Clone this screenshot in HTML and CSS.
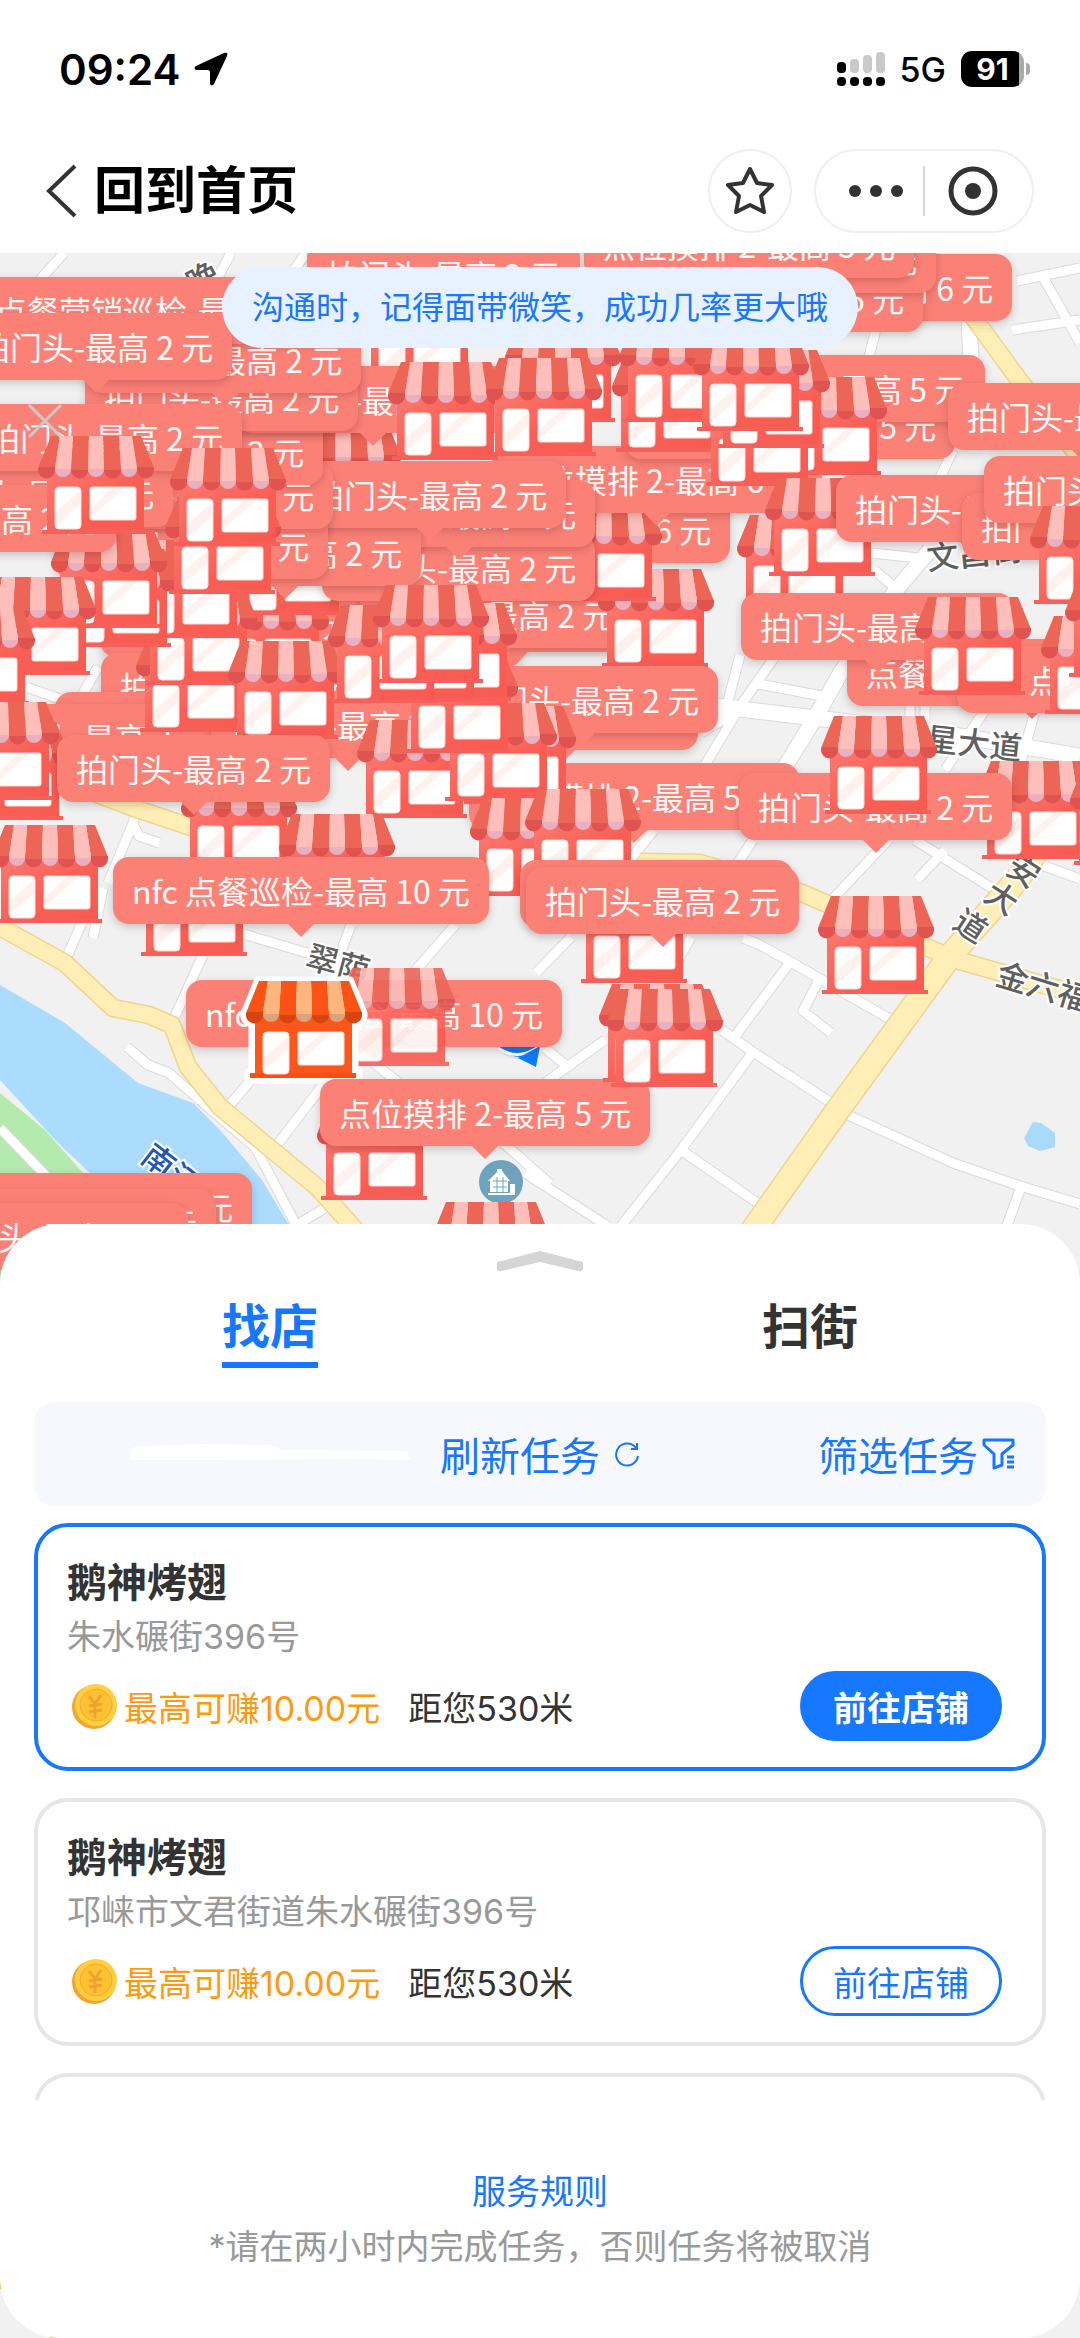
FILE: index.html
```html
<!DOCTYPE html>
<html lang="zh-CN">
<head>
    <meta charset="UTF-8">
    <meta name="viewport" content="width=device-width, initial-scale=1.0">
    <title>回到首页</title>
    <link rel="stylesheet" href="styles.css">
</head>
<body>
<div class="app">
    <div class="map" id="map">
        <svg class="map-base" viewBox="0 0 1080 2338" preserveAspectRatio="xMidYMin slice" aria-hidden="true">
            <defs>
                <linearGradient id="wall" x1="0" y1="0" x2="1" y2="1">
                    <stop offset="0" stop-color="#fb7a70"/>
                    <stop offset="0.6" stop-color="#f95e55"/>
                    <stop offset="1" stop-color="#f85a50"/>
                </linearGradient>
                <g id="glass">
                    <rect x="18" y="51" width="26" height="42" rx="4" fill="#fff" stroke="#ffd9d2"/>
                    <rect x="53" y="51" width="46" height="33" rx="2" fill="#fff" stroke="#ffd9d2"/>
                    <path d="M19 76 43 55v13L19 89zM54 72 76 52h11L54 81z" fill="#fff1ed"/>
                </g>
                <symbol id="shop" viewBox="0 0 118 98">
                    <path d="M10 30h97v66H10z" fill="url(#wall)"/>
                    <path d="M5 94h106v4H5z" fill="#f5605a"/>
                    <use href="#glass"/>
                    <path d="M14 0h9L18 32a8 8 0 0 1-17 0zM36 0h16l-1 32a8 8 0 0 1-17 0zM66 0h16l2 32a8 8 0 0 1-17 0zM95 0h9l13 32a8 8 0 0 1-17 0z" fill="#ec6557"/>
                    <path d="M2 31h16v3a8 8 0 0 1-17 0zM34 34h17a8 8 0 0 1-17 0zM67 34h17a8 8 0 0 1-17 0zM100 31h17v3a8 8 0 0 1-17 0z" fill="#df5350"/>
                    <path d="M23 0h13l-2 32a8 8 0 0 1-16 0zM52 0h14l1 32a8 8 0 0 1-16 0zM82 0h13l5 32a8 8 0 0 1-16 0z" fill="#febfba"/>
                    <path d="M18 33h16a8 8 0 0 1-16 0zM51 33h16a8 8 0 0 1-16 0zM84 33h16a8 8 0 0 1-16 0z" fill="#e8b0c0"/>
                </symbol>
                <symbol id="shop-active" viewBox="-5 -5 128 108">
                    <path d="M12-2h94l14 34c1 7-4 11-9 12v46h4v11H2V90h4V44C0 42-3 38-2 32z" fill="#fff" stroke="#fff" stroke-width="5" stroke-linejoin="round"/>
                    <path d="M10 30h97v66H10z" fill="#fb571b"/>
                    <path d="M5 92h106v5H5z" fill="#f84f14"/>
                    <use href="#glass"/>
                    <path d="M14 0h9L18 32a8 8 0 0 1-17 0zM36 0h16l-1 32a8 8 0 0 1-17 0zM66 0h16l2 32a8 8 0 0 1-17 0zM95 0h9l13 32a8 8 0 0 1-17 0z" fill="#fd5216"/>
                    <path d="M2 31h16v3a8 8 0 0 1-17 0zM34 34h17a8 8 0 0 1-17 0zM67 34h17a8 8 0 0 1-17 0zM100 31h17v3a8 8 0 0 1-17 0z" fill="#d6450f"/>
                    <path d="M23 0h13l-2 32a8 8 0 0 1-16 0zM52 0h14l1 32a8 8 0 0 1-16 0zM82 0h13l5 32a8 8 0 0 1-16 0z" fill="#ffb67d"/>
                    <path d="M18 33h16a8 8 0 0 1-16 0zM51 33h16a8 8 0 0 1-16 0zM84 33h16a8 8 0 0 1-16 0z" fill="#dca27c"/>
                </symbol>
                <path id="roads" d="M64 253 36 284M231 253l-14 26M306 253l-14 20M26 687l34 12M98 667l-18 32M141 795l-8 28-25 60M133 824l6 12 20 7M83 920l-20 46M103 888l-10 50M203 955l-31 68M240 933l74 22 30 20M351 925l-30 80M455 925l-40 46M251 1080l-22 26M323 1085l-46 60M370 1060l30 24M877 325l-10 40M1017 281l63-13M1043 277l37 66M1012 330l68-10M880 430l200-20M953 450l-16 34M871 553l48 5M898 590l-24-20M740 655l-14 54M753 683l69 13M705 765l36-60 35-50M654 830l-40 50M753 840l-20 30M890 838l-60 64M915 840l80 50M945 850l-28 30M1036 863l44 16M985 710l-40 60M1034 715l-14 50M910 690v30M925 690v30M571 937l-35 36M743 938l17 7 31 17 31 18 73 42M788 965l-52 70M722 1030l31 22 80 52M753 1052l-72 98-60 76M681 1150l78 54M848 1115l105 48 67 23 60 18M1021 1187l-16 44M819 980l-16 31 28 22M605 1040l-38 27-30 22M545 1048l24 20M525 1173l84 54M500 1140l50 44M691 937l-14 25M127 1047l21 18 21 8 34 30 52 44 40 76M285 1232l40-24M0 1128l50 52"/>
                <path id="wide-roads" d="M930 550l-34 40-56 84-25 44-32 52M715 706l100 12 120 14 145 24M969 320l2 40M700 730l40-24"/>
                <path id="main-roads" d="M0 927l65 36 48 45 36 7 23 10 16 42 32 40 97 80 45 50M968 310l54 74 60 76M60 780l80 30 60 20M640 862l60 1 102 30 124 54 34 14 120 34"/>
                <path id="avenue" d="M1085 780l-68 100-67 76-110 151-92 130"/>
            </defs>
            <rect width="1080" height="2338" fill="#f1f1f1"/>
            <path d="M0 985l65 38 73 60 55 20 27 27 42 50 30 50v60H160l-67-114-35-33L0 1080z" fill="#abdcfd"/>
            <path d="M0 1093l45 37 38 43 77 100-20 60H0z" fill="#b4eaae"/>
            <path d="M1024 1138l9-16 8 1 14 10v14l-15 4-12-5z" fill="#a9daf9"/>
            <g fill="none" stroke-linejoin="round">
                <use href="#roads" stroke="#dadada" stroke-width="11"/>
                <use href="#wide-roads" stroke="#dadada" stroke-width="17"/>
                <use href="#roads" stroke="#fff" stroke-width="9"/>
                <use href="#wide-roads" stroke="#fff" stroke-width="15"/>
                <use href="#main-roads" stroke="#f0d58f" stroke-width="19"/>
                <use href="#avenue" stroke="#f0d58f" stroke-width="26"/>
                <use href="#main-roads" stroke="#ffeeb5" stroke-width="16"/>
                <use href="#avenue" stroke="#ffeeb5" stroke-width="23"/>
            </g>
            <g class="road-names">
                <text transform="translate(194 296) rotate(-28)">晚</text>
                <text transform="translate(928 570) rotate(-6)">文昌街</text>
                <text transform="translate(925 750) rotate(6)">星大道</text>
                <text transform="translate(1004 872) rotate(33)">安</text>
                <text transform="translate(982 899) rotate(33)">大</text>
                <text transform="translate(951 927) rotate(33)">道</text>
                <text transform="translate(994 984) rotate(17)">金六福路</text>
                <text transform="translate(304 967) rotate(15)">翠荫</text>
                <text class="river-name" transform="translate(139 1160) rotate(38)">南河</text>
            </g>
            <circle cx="518" cy="1034" r="24" fill="#fff" stroke="#e2e2e2" stroke-width="2"/>
            <circle cx="520" cy="1030" r="27" fill="#0a7cff"/>
            <path d="M498 1048q20 14 42-2" fill="none" stroke="#fff" stroke-width="3"/>
            <path d="M540 1046l-4 21-18-9z" fill="#0a7cff"/>
            <circle cx="501" cy="1182" r="22" fill="#6fa3bd"/>
            <path d="M488 1181l9-9v-3h5v2l8 10h-2v11h-18v-11zM510 1184h5v10h-5zM488 1193h27v2h-27z" fill="#fff"/>
            <path d="M493 1181h14M493 1187h14M497 1177v15M503 1177v15" stroke="#6fa3bd" stroke-width="1"/>
            <ellipse cx="-2" cy="2280" rx="5" ry="10" fill="#fba62b"/>
            <ellipse cx="60" cy="2338" rx="10" ry="4" fill="#fba62b"/>
        </svg>
    </div>

    <header class="header">
        <div class="status-bar">
            <div class="status-left">
                <span class="clock">09:24</span>
                <svg width="34" height="34" viewBox="0 0 34 34"><path d="M30 1c3-1 4 0 3 3L20 32c-1 2-4 2-4-1V20c0-1-1-2-2-2H3c-3 0-3-3-1-4z"/></svg>
            </div>
            <div class="status-right">
                <svg width="48" height="36" viewBox="0 0 48 36">
                    <g fill="#c9c9c9"><rect x="13" y="8" width="9" height="14" rx="4"/><rect x="26" y="4" width="9" height="18" rx="4"/><rect x="39" y="1" width="9" height="21" rx="4"/></g>
                    <rect y="11" width="9" height="11" rx="4"/>
                    <rect y="26" width="9" height="9" rx="4"/><rect x="13" y="26" width="9" height="9" rx="4"/><rect x="26" y="26" width="9" height="9" rx="4"/><rect x="39" y="26" width="9" height="9" rx="4"/>
                </svg>
                <span class="network">5G</span>
                <span class="battery">91</span>
            </div>
        </div>
        <nav class="nav-bar">
            <a class="back" href="#">
                <svg width="32" height="54" viewBox="0 0 32 54" fill="none" stroke="#333" stroke-width="4"><path d="M29 2 3 27l26 25"/></svg>
                <span>回到首页</span>
            </a>
            <div class="nav-actions">
                <button class="favorite" aria-label="收藏">
                    <svg width="50" height="50" viewBox="0 0 50 50" fill="none" stroke="#333" stroke-width="4" stroke-linejoin="round"><path d="M25 3l7 14 15 2-11 11 3 16-14-7-14 7 3-16L3 19l15-2z"/></svg>
                </button>
                <div class="capsule">
                    <button aria-label="更多">
                        <svg width="54" height="12" viewBox="0 0 54 12" fill="#333"><circle cx="6" cy="6" r="6"/><circle cx="27" cy="6" r="6"/><circle cx="48" cy="6" r="6"/></svg>
                    </button>
                    <button aria-label="关闭">
                        <svg width="50" height="50" viewBox="0 0 50 50"><circle cx="25" cy="25" r="22" fill="none" stroke="#333" stroke-width="5"/><circle cx="25" cy="25" r="8" fill="#333"/></svg>
                    </button>
                </div>
            </div>
        </nav>
    </header>

    <p class="tip">沟通时，记得面带微笑，成功几率更大哦</p>
    <button class="tip-close" aria-label="关闭提示">
        <svg width="34" height="34" viewBox="0 0 34 34" stroke="#c9c9c9" stroke-width="3"><path d="M1 1l32 32M33 1 1 33"/></svg>
    </button>

    <main class="sheet">
        <svg class="handle" width="88" height="22" viewBox="0 0 88 22"><path d="M1 12 44 1l43 11v6q0 4-5 3L44 12 6 21q-5 1-5-3z" fill="#d5d5d5"/></svg>
        <div class="tabs">
            <button class="tab active">找店</button>
            <button class="tab">扫街</button>
        </div>
        <div class="toolbar">
            <svg class="smear" viewBox="0 0 282 22" aria-hidden="true"><path d="M3 5 10 3l60-2 70 1 14 5 124 1 4 9-60-1-150 1-70 0-2-2z" fill="#fff"/></svg>
            <button class="tool">刷新任务
                <svg width="26" height="26" viewBox="0 0 26 26" fill="none" stroke="#1677ff" stroke-width="2"><path d="M22 7a11 11 0 1 0 2 8M23 2v6h-6"/></svg>
            </button>
            <button class="tool filter">筛选任务
                <svg width="34" height="34" viewBox="0 0 34 34" fill="none" stroke="#1677ff" stroke-width="3" stroke-linejoin="round"><path d="M20 17l11-9V3H2v5l10 9v14l8-3zM25 20h7M25 25h7M25 30h7"/></svg>
            </button>
        </div>
        <div class="list">
            <article class="card selected">
                <h2>鹅神烤翅</h2>
                <p class="address">朱水碾街396号</p>
                <div class="card-row">
                    <svg class="coin" width="48" height="48" viewBox="0 0 48 48"><circle cx="23" cy="25" r="22" fill="#f2a531"/><circle cx="25" cy="23" r="21" fill="#ffcf40"/><circle cx="25" cy="23" r="16" fill="#fdc233" stroke="#f3ab2b"/><path d="M18 14l6 8 6-9M24 22v14M18 24l13-2M18 30l13-2" fill="none" stroke="#eda52c" stroke-width="3"/></svg>
                    <span class="reward">最高可赚10.00元</span>
                    <span class="distance">距您530米</span>
                    <button class="go">前往店铺</button>
                </div>
            </article>
            <article class="card">
                <h2>鹅神烤翅</h2>
                <p class="address">邛崃市文君街道朱水碾街396号</p>
                <div class="card-row">
                    <svg class="coin" width="48" height="48" viewBox="0 0 48 48"><circle cx="23" cy="25" r="22" fill="#f2a531"/><circle cx="25" cy="23" r="21" fill="#ffcf40"/><circle cx="25" cy="23" r="16" fill="#fdc233" stroke="#f3ab2b"/><path d="M18 14l6 8 6-9M24 22v14M18 24l13-2M18 30l13-2" fill="none" stroke="#eda52c" stroke-width="3"/></svg>
                    <span class="reward">最高可赚10.00元</span>
                    <span class="distance">距您530米</span>
                    <button class="go">前往店铺</button>
                </div>
            </article>
            <article class="card"></article>
        </div>
        <footer class="footer">
            <a href="#">服务规则</a>
            <p>*请在两小时内完成任务，否则任务将被取消</p>
        </footer>
    </main>
</div>
<script src="script.js"></script>
</body>
</html>
```

FILE: styles.css
```css
* {
    box-sizing: border-box;
}

body {
    margin: 0;
    font-family: Inter, "Noto Sans CJK SC", sans-serif;
    font-size: 34px;
    color: #333;
    background: #f1f1f1;
}

h2, p {
    margin: 0;
}

button {
    padding: 0;
    border: 0;
    background: none;
    font: inherit;
    color: inherit;
    cursor: pointer;
}

a {
    color: inherit;
    text-decoration: none;
}

svg {
    display: block;
    flex-shrink: 0;
}

.app {
    position: relative;
    display: flex;
    flex-direction: column;
    min-height: 100vh;
    overflow: hidden;
}

/* map */
.map {
    position: absolute;
    inset: 0;
    overflow: hidden;
    font-family: "Noto Sans CJK SC", sans-serif;
}

.map-base {
    width: 100%;
    height: 100%;
}

.road-names {
    font-size: 32px;
    font-weight: 500;
    fill: #5f5f5f;
    stroke: #fff;
    stroke-width: 4px;
    paint-order: stroke;
}

.river-name {
    fill: #2456b8;
}

.shop {
    position: absolute;
    width: 118px;
    height: 98px;
}

.shop.faded {
    opacity: 0.9;
}

.shop.active {
    width: 128px;
    height: 108px;
}

.bubble {
    position: absolute;
    height: 67px;
    padding: 0 19px;
    border-radius: 16px;
    background: #fb8177;
    box-shadow: 0 3px 8px rgba(60, 20, 20, 0.22);
    color: #fff8f6;
    font-size: 32px;
    line-height: 67px;
    white-space: nowrap;
}

.bubble::after {
    content: "";
    position: absolute;
    top: 100%;
    left: 50%;
    margin-left: -13px;
    border: 13px solid transparent;
    border-top-color: #fb8177;
    border-bottom: 0;
}

/* header */
.header {
    position: relative;
    background: #fff;
}

.status-bar,
.nav-bar,
.status-left,
.status-right,
.nav-actions,
.capsule,
.back {
    display: flex;
    align-items: center;
}

.status-bar {
    justify-content: space-between;
    height: 138px;
    padding: 0 50px 0 59px;
    color: #000;
}

.status-left {
    gap: 14px;
}

.status-right {
    gap: 15px;
}

.clock {
    font-size: 42px;
    font-weight: 600;
}

.network {
    font-size: 34px;
    font-weight: 500;
}

.battery {
    position: relative;
    width: 63px;
    height: 36px;
    margin-right: 6px;
    border-radius: 11px;
    background: linear-gradient(90deg, #000 58px, #aaa 58px);
    color: #fff;
    font-size: 30px;
    font-weight: 700;
    line-height: 36px;
    text-align: center;
}

.battery::after {
    content: "";
    position: absolute;
    top: 12px;
    right: -6px;
    width: 4px;
    height: 12px;
    border-radius: 0 4px 4px 0;
    background: #aaa;
}

.nav-bar {
    justify-content: space-between;
    height: 115px;
    padding: 0 46px 10px;
}

.back {
    gap: 16px;
    color: #000;
    font-size: 51px;
    font-weight: 600;
}

.back span {
    padding-bottom: 8px;
}

.nav-actions {
    gap: 22px;
}

.favorite,
.capsule {
    height: 84px;
    border: 2px solid #efefef;
    border-radius: 42px;
}

.favorite {
    display: grid;
    place-items: center;
    width: 84px;
}

.capsule {
    width: 220px;
    padding: 0 12px;
}

.capsule button {
    display: grid;
    flex: 1;
    place-items: center;
    height: 50px;
}

.capsule button + button {
    border-left: 2px solid #d8d8d8;
}

/* tip over the map */
.tip {
    position: relative;
    align-self: center;
    margin-top: 14px;
    padding: 0 30px;
    border-radius: 41px;
    background: #e7f1ff;
    color: #1677ff;
    font-size: 32px;
    line-height: 81px;
}

.tip-close {
    position: relative;
    align-self: flex-start;
    margin: 56px 28px 0;
}

/* bottom sheet */
.sheet {
    position: relative;
    display: flex;
    flex-direction: column;
    margin-top: auto;
    padding: 26px 34px 64px;
    border-radius: 60px;
    background: #fff;
}

.handle {
    align-self: center;
}

.tabs {
    display: flex;
    justify-content: space-around;
    margin: 22px -34px 34px;
}

.tab {
    padding-bottom: 2px;
    border-bottom: 6px solid transparent;
    font-size: 48px;
    font-weight: 600;
    line-height: 66px;
}

.tab.active {
    border-color: #1677ff;
    color: #1677ff;
}

.toolbar {
    display: flex;
    align-items: center;
    height: 104px;
    padding: 0 30px;
    border-radius: 20px;
    background: #f6f8fd;
    color: #1677ff;
    font-size: 40px;
}

.smear {
    width: 282px;
    margin: 0 29px 0 65px;
}

.tool {
    display: flex;
    align-items: center;
    gap: 14px;
}

.filter {
    gap: 4px;
    margin-left: auto;
}

.list {
    display: flex;
    flex-direction: column;
    gap: 27px;
    height: 594px;
    padding-top: 17px;
    overflow: hidden;
}

.card {
    flex: none;
    min-height: 248px;
    padding: 28px 40px 26px 29px;
    border: 4px solid #e6e6e6;
    border-radius: 34px;
}

.card.selected {
    border-color: #1677ff;
}

.card h2 {
    font-size: 40px;
    font-weight: 700;
    line-height: 56px;
}

.address {
    color: #999;
    line-height: 52px;
}

.card-row {
    display: flex;
    align-items: center;
    margin-top: 8px;
}

.coin {
    margin: 0 5px 0 4px;
}

.reward {
    color: #ff9a0e;
}

.distance {
    margin-left: 28px;
}

.go {
    width: 202px;
    height: 70px;
    margin-left: auto;
    border: 3px solid #1677ff;
    border-radius: 35px;
    color: #1677ff;
}

.selected .go {
    background: #1677ff;
    color: #fff;
    font-weight: 600;
}

.footer {
    margin-top: 64px;
    color: #999;
    line-height: 55px;
    text-align: center;
}

.footer a {
    color: #1677ff;
}
```

FILE: script.js
```js
const map = document.getElementById('map');

const texts = {
    door2: '拍门头-最高 2 元',
    survey5: '点位摸排 2-最高 5 元',
    survey6: '点位摸排 2-最高 6 元',
    nfc: 'nfc 点餐巡检-最高 10 元',
    promo: '点餐营销巡检-最高 5 元'
};

// [type, x, y], drawn from back to front
const pins = [
    ['survey6', 682, 254], ['survey5', 593, 265], ['survey5', 606, 226], ['survey5', 584, 211], ['door2', 307, 241],
    ['door2', 250, 600], ['door2', 100, 590], ['shop', 361, 290],
    ['door2', 378, 585], ['door2', 360, 581], ['shop', 597, 569], ['survey6', 400, 496],
    ['shop', 545, 503], ['survey6', 492, 446],
    ['shop', 212, 588], ['shop', 232, 517], ['shop', 284, 424],
    ['door2', 322, 534], ['door2', 322, 480], ['door2', 148, 519], ['door2', 293, 461],
    ['door2', 55, 512], ['door2', 60, 462], ['door2', 50, 418], ['door2', 236, 366],
    ['door2', 85, 364], ['door2', 88, 326],
    ['door2', -100, 460], ['door2', -31, 404], ['promo', -24, 277], ['door2', -41, 313],
    ['survey5', 625, 392], ['survey5', 655, 355], ['shop', 504, 324], ['shop', 387, 362], ['shop', 485, 358],
    ['shop', 770, 377], ['shop', 611, 354], ['shop', 618, 324], ['shop', 701, 388], ['shop', 713, 350], ['shop', 692, 333],
    ['door2', 948, 383], ['shop', 736, 515], ['shop', 764, 478], ['door2', 836, 475],
    ['door2', 962, 493], ['door2', 984, 456], ['shop', 1029, 506],
    ['promo', 847, 639], ['nfc', 957, 646], ['door2', 741, 593], ['shop', 914, 597],
    ['shop', 1040, 616], ['shop', 1064, 579],
    ['door2', 101, 653], ['door2', 55, 692], ['door2', -43, 704], ['door2', 211, 691],
    ['shop', 135, 634], ['shop', 140, 587], ['shop', 130, 540], ['shop', 60, 549], ['shop', 50, 530],
    ['shop', 164, 496], ['shop', 169, 448],
    ['door2', -157, 485], ['shop', 37, 436],
    ['shop', -21, 577], ['shop', -82, 607], ['shop', -48, 722], ['shop', -58, 702],
    ['door2', 425, 683], ['door2', 445, 666], ['shop', 356, 720], ['shop', 227, 641],
    ['survey5', 469, 763], ['shop', 459, 706], ['shop', 440, 703], ['shop', 401, 655],
    ['shop', 400, 603], ['shop', 367, 604], ['shop', 327, 605], ['shop', 372, 585],
    ['shop', 180, 775], ['door2', 57, 735], ['shop', -9, 825], ['shop', 278, 814],
    ['shop', 469, 798], ['shop', 524, 789],
    ['shop', 977, 761], ['shop', 1069, 767], ['door2', 739, 773], ['shop', 820, 716],
    ['shop', 136, 858], ['nfc', 113, 857],
    ['shop', 576, 885], ['door2', 520, 860], ['door2', 526, 867], ['shop', 817, 896],
    ['nfc', 186, 980], ['faded', 338, 968], ['active', 240, 976],
    ['shop', 316, 1102], ['survey5', 320, 1079], ['shop', 598, 984], ['shop', 606, 989],
    ['shop', 432, 1202],
    ['door2', -21, 1173], ['door2', -57, 1189], ['door2', -85, 1203]
];

pins.forEach(([type, x, y]) => {
    let el;
    if (texts[type]) {
        el = document.createElement('div');
        el.className = 'bubble';
        el.textContent = texts[type];
    } else {
        el = document.createElementNS('http://www.w3.org/2000/svg', 'svg');
        el.setAttribute('class', 'shop ' + type);
        const use = document.createElementNS('http://www.w3.org/2000/svg', 'use');
        use.setAttribute('href', type === 'active' ? '#shop-active' : '#shop');
        el.appendChild(use);
    }
    el.style.left = x + 'px';
    el.style.top = y + 'px';
    map.appendChild(el);
});
```
